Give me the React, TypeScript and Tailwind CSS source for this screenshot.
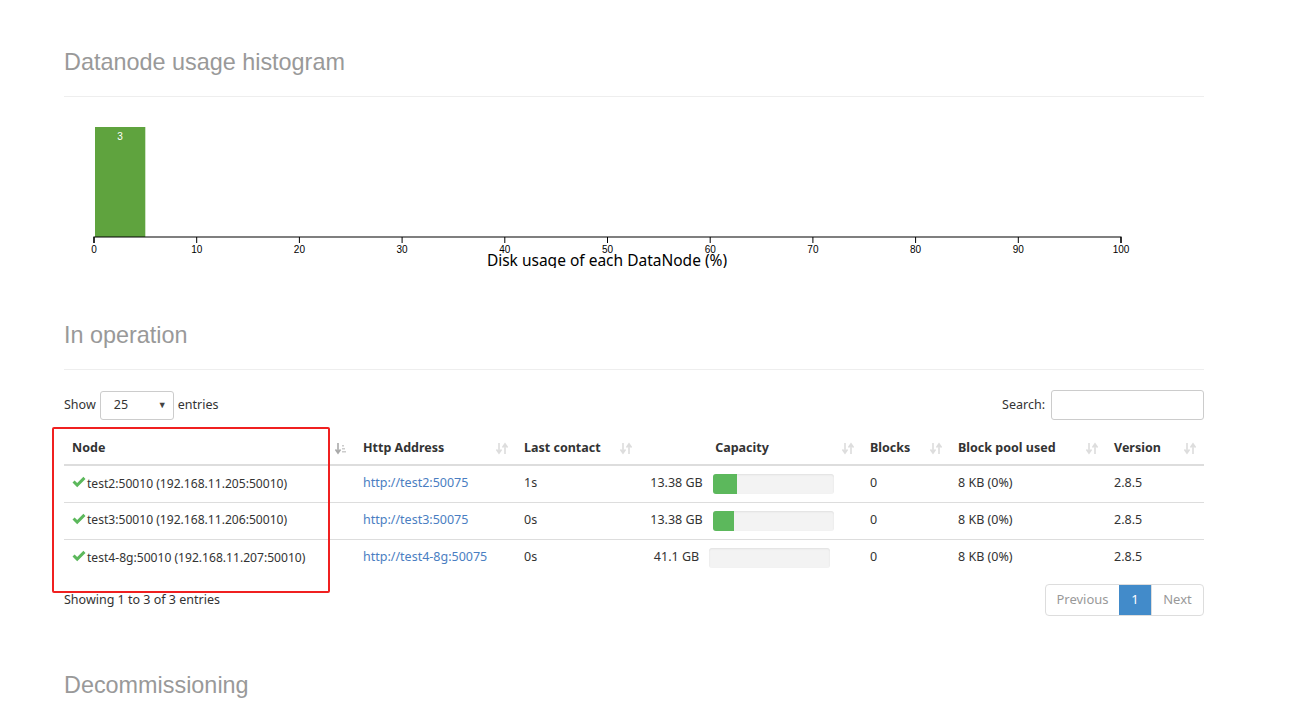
import React from "react";

const rows = [
  { node: "test2:50010 (192.168.11.205:50010)", http: "http://test2:50075", last: "1s", cap: "13.38 GB", used: 20 },
  { node: "test3:50010 (192.168.11.206:50010)", http: "http://test3:50075", last: "0s", cap: "13.38 GB", used: 18 },
  { node: "test4-8g:50010 (192.168.11.207:50010)", http: "http://test4-8g:50075", last: "0s", cap: "41.1 GB", used: 0 },
];

function SortIcon({ active = false }: { active?: boolean }) {
  return (
    <svg width="12" height="13" viewBox="0 0 12 13" className="shrink-0">
      <path d="M3 1v9M0.5 7.5L3 11l2.5-3.5" stroke={active ? "#aaa" : "#ddd"} strokeWidth="1.6" fill="none" />
      {active ? (
        <g fill="#ccc">
          <rect x="7" y="3" width="2" height="1.5" />
          <rect x="7" y="6" width="3" height="1.5" />
          <rect x="7" y="9" width="4" height="1.5" />
        </g>
      ) : (
        <path d="M9 12V3M6.5 5.5L9 2l2.5 3.5" stroke="#ddd" strokeWidth="1.6" fill="none" />
      )}
    </svg>
  );
}

function Check() {
  return (
    <svg width="14" height="12" viewBox="0 0 14 12" className="mr-px inline-block -translate-y-[2px]">
      <path d="M0.5 6.5L2.6 4.4L5.2 7L11.4 0.8L13.5 2.9L5.2 11.2Z" fill="#5cb85c" />
    </svg>
  );
}

function SectionHeader({ title }: { title: string }) {
  return (
    <div className="border-b border-[#eee] pb-[21px]">
      <h2 className="text-[23.4px] leading-[26px] text-[#999] [font-family:'Liberation_Sans',Arial,sans-serif]">
        {title}
      </h2>
    </div>
  );
}

function Histogram() {
  const x0 = 30;
  const w = 1027;
  const ticks = [0, 10, 20, 30, 40, 50, 60, 70, 80, 90, 100];
  return (
    <svg width="1140" height="171" className="block">
      <rect x={x0 + 1} y={30} width={50.3} height={110} fill="#5fa33e" />
      <text x={x0 + 26} y={43} fontSize="10" fill="#fff" textAnchor="middle" fontFamily="Liberation Sans, Arial, sans-serif">
        3
      </text>
      <path d={`M${x0} 146V140H${x0 + w}V146`} stroke="#000" fill="none" strokeWidth="1.2" />
      {ticks.map((t) => {
        const x = x0 + (t / 100) * w;
        return (
          <g key={t}>
            <line x1={x} x2={x} y1={140} y2={146} stroke="#000" />
            <text x={x} y={156} fontSize="10" textAnchor="middle" fill="#000" fontFamily="Liberation Sans, Arial, sans-serif">
              {t}
            </text>
          </g>
        );
      })}
      <text x={543} y={169} fontSize="15.5" textAnchor="middle" fill="#000" fontFamily="Noto Sans, sans-serif">
        Disk usage of each DataNode (%)
      </text>
    </svg>
  );
}

export default function App() {
  return (
    <div className="min-h-[710px] bg-white text-[12.5px] text-[#333] [font-family:'Noto_Sans',sans-serif]">
      <div className="ml-[64px] w-[1140px] pt-[49px]">
        <SectionHeader title="Datanode usage histogram" />
        <Histogram />

        <div className="mt-[54px]">
          <SectionHeader title="In operation" />
        </div>

        <div className="mt-[20px] flex items-center justify-between">
          <div className="flex items-center">
            <span>Show</span>
            <div className="mx-[4px] flex h-[29px] w-[74px] items-center justify-between rounded-[3px] border border-[#ccc] pl-[13px] pr-[6px]">
              <span>25</span>
              <span className="text-[9px] text-[#444]">▼</span>
            </div>
            <span>entries</span>
          </div>
          <div className="flex items-center">
            <span>Search:</span>
            <div className="ml-[6px] h-[30px] w-[153px] rounded-[3px] border border-[#ccc]" />
          </div>
        </div>

        <div className="relative mt-[11px]">
          <table className="w-full table-fixed border-collapse">
            <colgroup>
              <col className="w-[291px]" />
              <col className="w-[161px]" />
              <col className="w-[124px]" />
              <col className="w-[222px]" />
              <col className="w-[88px]" />
              <col className="w-[156px]" />
              <col className="w-[98px]" />
            </colgroup>
            <thead>
              <tr className="h-[34px] border-b-2 border-[#ddd] font-bold">
                <th className="px-[8px] pt-[2px] text-left">
                  <div className="flex items-center justify-between">
                    Node <SortIcon active />
                  </div>
                </th>
                <th className="px-[8px] pt-[2px] text-left">
                  <div className="flex items-center justify-between">
                    Http Address <SortIcon />
                  </div>
                </th>
                <th className="px-[8px] pt-[2px] text-left">
                  <div className="flex items-center justify-between">
                    Last contact <SortIcon />
                  </div>
                </th>
                <th className="px-[8px] pt-[2px]">
                  <div className="flex items-center justify-between">
                    <span className="flex-1 pr-[6px] text-center">Capacity</span>
                    <SortIcon />
                  </div>
                </th>
                <th className="px-[8px] pt-[2px] text-left">
                  <div className="flex items-center justify-between">
                    Blocks <SortIcon />
                  </div>
                </th>
                <th className="px-[8px] pt-[2px] text-left">
                  <div className="flex items-center justify-between">
                    Block pool used <SortIcon />
                  </div>
                </th>
                <th className="px-[8px] pt-[2px] text-left">
                  <div className="flex items-center justify-between">
                    Version <SortIcon />
                  </div>
                </th>
              </tr>
            </thead>
            <tbody>
              {rows.map((r, i) => (
                <tr key={r.node} className={`h-[37px] ${i < rows.length - 1 ? "border-b border-[#ddd]" : ""}`}>
                  <td className="whitespace-nowrap pl-[8px] text-[12.1px]">
                    <Check />
                    {r.node}
                  </td>
                  <td className="px-[8px]">
                    <span className="text-[#4a7ec2]">{r.http}</span>
                  </td>
                  <td className="px-[8px]">{r.last}</td>
                  <td className="pl-[8px] pr-[26px]">
                    <div className="flex items-center justify-center gap-[10px]">
                      <span>{r.cap}</span>
                      <div className="h-[20px] w-[121px] overflow-hidden rounded-[3px] bg-[#f3f3f3] shadow-[inset_0_1px_2px_rgba(0,0,0,0.08)]">
                        <div className="h-full bg-[#5cb85c]" style={{ width: `${r.used}%` }} />
                      </div>
                    </div>
                  </td>
                  <td className="px-[8px]">0</td>
                  <td className="px-[8px]">8 KB (0%)</td>
                  <td className="px-[8px]">2.8.5</td>
                </tr>
              ))}
            </tbody>
          </table>
          <div className="pointer-events-none absolute left-[-12px] top-[-4px] h-[166px] w-[278px] rounded-[2px] border-2 border-[#f02020]" />
        </div>

        <div className="mt-[8px] flex items-start justify-between">
          <span className="mt-[7px]">Showing 1 to 3 of 3 entries</span>
          <div className="flex h-[32px] overflow-hidden rounded-[4px] border border-[#ddd] text-[13px]">
            <span className="flex w-[73px] items-center justify-center text-[#999]">Previous</span>
            <span className="flex w-[32px] items-center justify-center bg-[#428bca] text-white">1</span>
            <span className="flex w-[52px] items-center justify-center border-l border-[#ddd] text-[#999]">Next</span>
          </div>
        </div>

        <div className="mt-[56px]">
          <SectionHeader title="Decommissioning" />
        </div>
      </div>
    </div>
  );
}
